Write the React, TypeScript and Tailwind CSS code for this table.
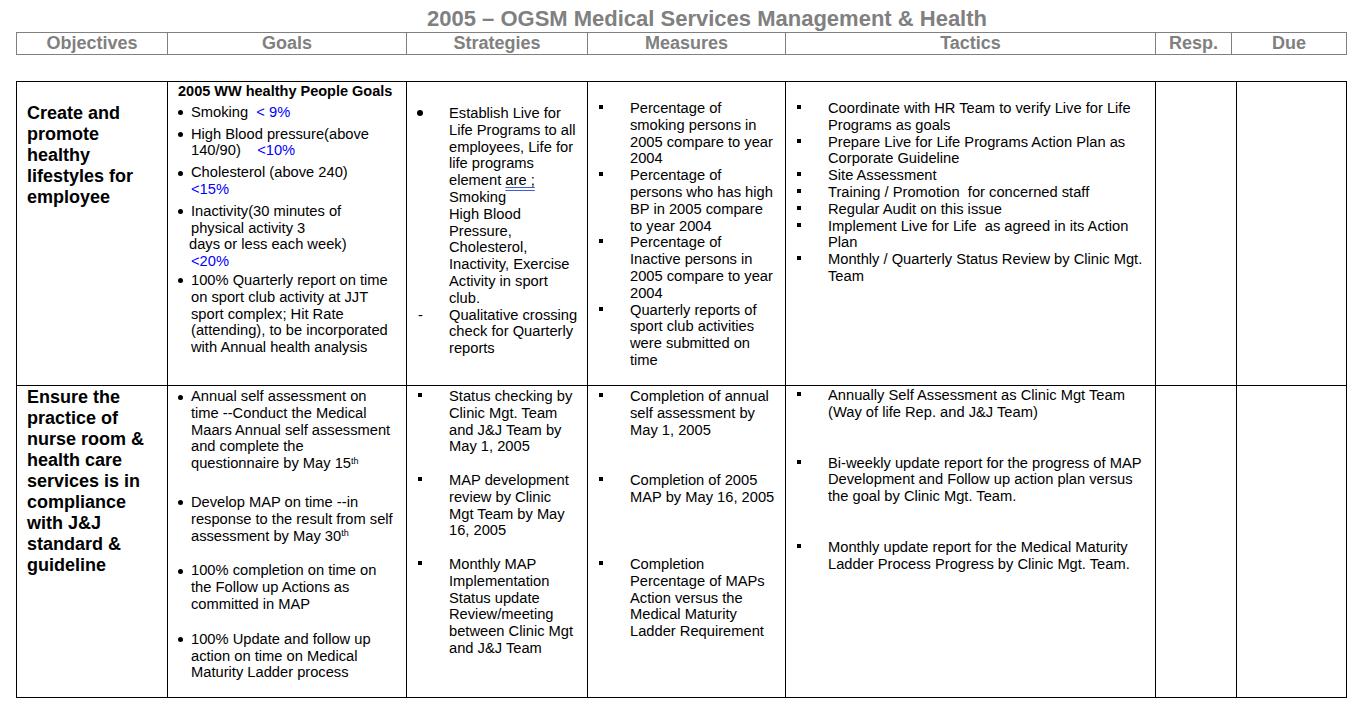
import React from "react"

const headCols = "grid grid-cols-[151px_239px_181px_198px_370px_76px_115px]"
const bodyCols = "grid grid-cols-[151px_239px_181px_198px_370px_81px_110px]"

type L = React.ReactNode

function Lines({ lines }: { lines: L[] }) {
  return (
    <>
      {lines.map((l, i) => (
        <div key={i} className="whitespace-pre">
          {l}
        </div>
      ))}
    </>
  )
}

function SquareItem({ lines, className = "" }: { lines: L[]; className?: string }) {
  return (
    <div className={"flex " + className}>
      <div className="w-[31px] shrink-0 pt-[5px]">
        <div className="h-[4px] w-[4px] bg-black" />
      </div>
      <div>
        <Lines lines={lines} />
      </div>
    </div>
  )
}

function DotItem({ lines, className = "" }: { lines: L[]; className?: string }) {
  return (
    <div className={"flex " + className}>
      <div className="w-[13px] shrink-0 pt-[6.5px]">
        <div className="h-[5px] w-[5px] rounded-full bg-black" />
      </div>
      <div>
        <Lines lines={lines} />
      </div>
    </div>
  )
}

const Blue = ({ children }: { children: L }) => <span className="text-[#0000ff]">{children}</span>
const Th = () => <sup className="text-[9px]">th</sup>

export default function App() {
  return (
    <div className="min-h-[703px] w-[1357px] bg-white font-['Liberation_Sans',Arial,sans-serif] text-black">
      <div className="h-[32px] pl-[427px] pt-[8px] text-[22px] font-bold leading-[22px] text-[#808080]">
        2005 – OGSM Medical Services Management &amp; Health
      </div>

      <div className={headCols + " ml-[16px] w-[1331px] border-l border-t border-[#808080] text-center text-[18px] font-bold leading-[21px] text-[#808080]"}>
        {["Objectives", "Goals", "Strategies", "Measures", "Tactics", "Resp.", "Due"].map((h) => (
          <div key={h} className="h-[22px] border-b border-r border-[#808080]">
            {h}
          </div>
        ))}
      </div>

      <div className={bodyCols + " ml-[16px] mt-[26px] w-[1331px] border-l border-t border-black text-[14.7px] leading-[16.8px]"}>
        {/* row 1 */}
        <div className="h-[304px] border-b border-r border-black pl-[10px] pt-[21px] text-[18px] font-bold leading-[21px]">
          <Lines lines={["Create and", "promote", "healthy", "lifestyles for", "employee"]} />
        </div>
        <div className="h-[304px] border-b border-r border-black pl-[10px] pt-[1px]">
          <div className="mb-[4px] text-[14.5px] font-bold">2005 WW healthy People Goals</div>
          <DotItem className="mb-[5px]" lines={[<>Smoking  <Blue>&lt; 9%</Blue></>]} />
          <DotItem className="mb-[5px]" lines={["High Blood pressure(above", <>140/90)    <Blue>&lt;10%</Blue></>]} />
          <DotItem className="mb-[5px]" lines={["Cholesterol (above 240)", <Blue>&lt;15%</Blue>]} />
          <DotItem
            className="mb-[2px]"
            lines={["Inactivity(30 minutes of", "physical activity 3", <span className="-ml-[2px]">days or less each week)</span>, <Blue>&lt;20%</Blue>]}
          />
          <DotItem
            lines={[
              "100% Quarterly report on time",
              "on sport club activity at JJT",
              "sport complex; Hit Rate",
              "(attending), to be incorporated",
              "with Annual health analysis",
            ]}
          />
        </div>
        <div className="h-[304px] border-b border-r border-black pl-[10px] pt-[23px]">
          <div className="flex">
            <div className="w-[32px] shrink-0 pt-[5px]">
              <div className="h-[6px] w-[6px] rounded-full bg-black" />
            </div>
            <div>
              <Lines
                lines={[
                  "Establish Live for",
                  "Life Programs to all",
                  "employees, Life for",
                  "life programs",
                  <>
                    element{" "}
                    <span className="underline decoration-[#3b5fd0] decoration-double underline-offset-[2px]">are ;</span>
                  </>,
                  "Smoking",
                  "High Blood",
                  "Pressure,",
                  "Cholesterol,",
                  "Inactivity, Exercise",
                  "Activity in sport",
                  "club.",
                ]}
              />
            </div>
          </div>
          <div className="flex">
            <div className="w-[32px] shrink-0 pl-[1px]">-</div>
            <div>
              <Lines lines={["Qualitative crossing", "check for Quarterly", "reports"]} />
            </div>
          </div>
        </div>
        <div className="h-[304px] border-b border-r border-black pl-[11px] pt-[18px]">
          <SquareItem lines={["Percentage of", "smoking persons in", "2005 compare to year", "2004"]} />
          <SquareItem lines={["Percentage of", "persons who has high", "BP in 2005 compare", "to year 2004"]} />
          <SquareItem lines={["Percentage of", "Inactive persons in", "2005 compare to year", "2004"]} />
          <SquareItem lines={["Quarterly reports of", "sport club activities", "were submitted on", "time"]} />
        </div>
        <div className="h-[304px] border-b border-r border-black pl-[11px] pt-[18px]">
          <SquareItem lines={["Coordinate with HR Team to verify Live for Life", "Programs as goals"]} />
          <SquareItem lines={["Prepare Live for Life Programs Action Plan as", "Corporate Guideline"]} />
          <SquareItem lines={["Site Assessment"]} />
          <SquareItem lines={["Training / Promotion  for concerned staff"]} />
          <SquareItem lines={["Regular Audit on this issue"]} />
          <SquareItem lines={["Implement Live for Life  as agreed in its Action", "Plan"]} />
          <SquareItem lines={["Monthly / Quarterly Status Review by Clinic Mgt.", "Team"]} />
        </div>
        <div className="h-[304px] border-b border-r border-black" />
        <div className="h-[304px] border-b border-r border-black" />

        {/* row 2 */}
        <div className="h-[312px] border-b border-r border-black pl-[10px] pt-[1px] text-[18px] font-bold leading-[21px]">
          <Lines
            lines={[
              "Ensure the",
              "practice of",
              "nurse room &",
              "health care",
              "services is in",
              "compliance",
              "with J&J",
              "standard &",
              "guideline",
            ]}
          />
        </div>
        <div className="h-[312px] border-b border-r border-black pl-[10px] pt-[2px]">
          <DotItem
            className="mb-[22px]"
            lines={[
              "Annual self assessment on",
              "time --Conduct the Medical",
              "Maars Annual self assessment",
              "and complete the",
              <>
                questionnaire by May 15<Th />
              </>,
            ]}
          />
          <DotItem
            className="mb-[18px]"
            lines={[
              "Develop MAP on time --in",
              "response to the result from self",
              <>
                assessment by May 30<Th />
              </>,
            ]}
          />
          <DotItem className="mb-[18px]" lines={["100% completion on time on", "the Follow up Actions as", "committed in MAP"]} />
          <DotItem lines={["100% Update and follow up", "action on time on Medical", "Maturity Ladder process"]} />
        </div>
        <div className="h-[312px] border-b border-r border-black pl-[11px] pt-[2px]">
          <SquareItem className="h-[84px]" lines={["Status checking by", "Clinic Mgt. Team", "and J&J Team by", "May 1, 2005"]} />
          <SquareItem className="h-[84px]" lines={["MAP development", "review by Clinic", "Mgt Team by May", "16, 2005"]} />
          <SquareItem
            lines={["Monthly MAP", "Implementation", "Status update", "Review/meeting", "between Clinic Mgt", "and J&J Team"]}
          />
        </div>
        <div className="h-[312px] border-b border-r border-black pl-[11px] pt-[2px]">
          <SquareItem className="h-[84px]" lines={["Completion of annual", "self assessment by", "May 1, 2005"]} />
          <SquareItem className="h-[84px]" lines={["Completion of 2005", "MAP by May 16, 2005"]} />
          <SquareItem
            lines={["Completion", "Percentage of MAPs", "Action versus the", "Medical Maturity", "Ladder Requirement"]}
          />
        </div>
        <div className="h-[312px] border-b border-r border-black pl-[11px] pt-[1px]">
          <SquareItem
            className="mb-[34px]"
            lines={["Annually Self Assessment as Clinic Mgt Team", "(Way of life Rep. and J&J Team)"]}
          />
          <SquareItem
            className="mb-[34px]"
            lines={[
              "Bi-weekly update report for the progress of MAP",
              "Development and Follow up action plan versus",
              "the goal by Clinic Mgt. Team.",
            ]}
          />
          <SquareItem
            lines={["Monthly update report for the Medical Maturity", "Ladder Process Progress by Clinic Mgt. Team."]}
          />
        </div>
        <div className="h-[312px] border-b border-r border-black" />
        <div className="h-[312px] border-b border-r border-black" />
      </div>
    </div>
  )
}
